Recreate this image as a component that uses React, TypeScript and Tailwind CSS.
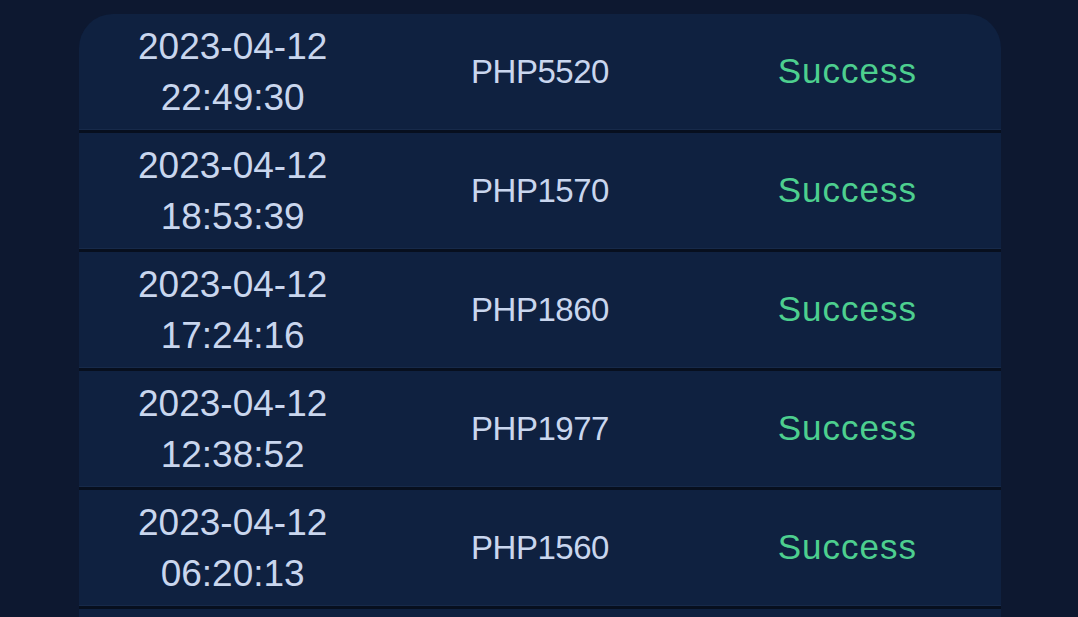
import React from 'react';

type Row = { date: string; time: string; amount: string; status: string };

const rows: Row[] = [
    { date: '2023-04-12', time: '22:49:30', amount: 'PHP5520', status: 'Success' },
    { date: '2023-04-12', time: '18:53:39', amount: 'PHP1570', status: 'Success' },
    { date: '2023-04-12', time: '17:24:16', amount: 'PHP1860', status: 'Success' },
    { date: '2023-04-12', time: '12:38:52', amount: 'PHP1977', status: 'Success' },
    { date: '2023-04-12', time: '06:20:13', amount: 'PHP1560', status: 'Success' },
];

const font = { fontFamily: '"Liberation Sans", Arial, sans-serif' };

export default function App() {
    return (
        <div className="h-[617px] w-[1078px] overflow-hidden bg-[#0d1830] pt-[14px]" style={font}>
            <div className="ml-[79px] w-[922px] overflow-hidden rounded-t-[34px] bg-[#0f2140]">
                {rows.map((r, i) => (
                    <div key={i} className="border-b-[3px] border-[#070f1e]">
                        <div className="grid h-[116px] grid-cols-3 items-center border-b border-[#172a4a]">
                            <div className="flex flex-col items-center text-[37px] leading-[51px] text-[#c9d6ee]">
                                <span>{r.date}</span>
                                <span>{r.time}</span>
                            </div>
                            <div className="text-center text-[33px] tracking-[-0.5px] text-[#c9d6ee]">{r.amount}</div>
                            <div className="text-center text-[35px] tracking-[1px] text-[#4dcf8f]">{r.status}</div>
                        </div>
                    </div>
                ))}
                {/* next row, only its top edge shows */}
                <div className="h-[20px]" />
            </div>
        </div>
    );
}
